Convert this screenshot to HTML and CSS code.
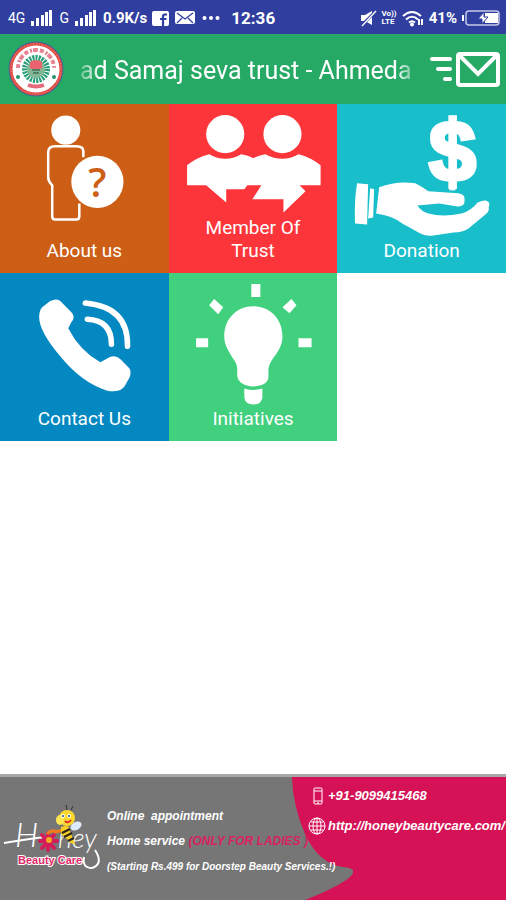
FILE: index.html
```html
<!DOCTYPE html>
<html lang="en">
<head>
<meta charset="utf-8">
<meta name="viewport" content="width=device-width, initial-scale=1">
<title>Samaj seva trust - Ahmedabad</title>
<link rel="stylesheet" href="styles.css">
</head>
<body>
<div class="status">
  <span class="net">4G</span>
  <svg class="bars" width="22" height="18" viewBox="0 0 22 18" aria-hidden="true"><path d="M2.500 12v5M7.500 9v8M12.500 6v11M16.500 3v14M20.500 1v16"/></svg>
  <span class="net second">G</span>
  <svg class="bars" width="22" height="18" viewBox="0 0 22 18" aria-hidden="true"><path d="M2.500 12v5M7.500 9v8M12.500 6v11M16.500 3v14M20.500 1v16"/></svg>
  <span class="rate">0.9K/s</span>
  <svg width="17" height="17" viewBox="0 0 17 17" aria-hidden="true"><rect x="0" y="1" width="17" height="15" rx="2" fill="#fff"/><path d="M15 4.500h-2q-2 0-2 2.200V16M8 9h6.500" fill="none" stroke="#303f9f" stroke-width="2.200"/></svg>
  <svg class="mail-mini" width="20" height="14" viewBox="0 0 20 14" aria-hidden="true"><rect x="0" y="0" width="20" height="13" rx="2" fill="#fff"/><path d="M2 2l8 6 8-6M2 12l5-5M18 12l-5-5" fill="none" stroke="#303f9f" stroke-width="1.300"/></svg>
  <svg width="18" height="6" viewBox="0 0 18 6" fill="#fff" aria-hidden="true"><circle cx="2.500" cy="3" r="2"/><circle cx="9" cy="3" r="2"/><circle cx="15.500" cy="3" r="2"/></svg>
  <time class="clock">12:36</time>
  <div class="status-right">
    <svg width="17" height="17" viewBox="0 0 17 17" aria-hidden="true"><path d="M1 5h4l7-4v14l-7-4H1z" fill="#fff"/><path d="M1 16L16 1" stroke="#303f9f" stroke-width="3"/><path d="M2 16L16 1" stroke="#fff" stroke-width="1.300"/></svg>
    <span class="volte"><span>Vo))</span><span>LTE</span></span>
    <svg width="22" height="17" viewBox="0 0 22 17" fill="none" stroke="#fff" stroke-width="2" aria-hidden="true"><path d="M1 6q9-8 18 0M4 9.500q6-5.500 12 0M7 12.500q3-2.500 6 0"/><circle cx="10" cy="14.500" r="1" fill="#fff"/><path d="M17 9v6M20 15v-6"/></svg>
    <span class="percent">41%</span>
    <svg width="38" height="16" viewBox="0 0 38 16" aria-hidden="true"><rect x="4" y="1" width="33" height="14" rx="3" fill="none" stroke="#c5cae9" stroke-width="1.500"/><path d="M1 5v6" stroke="#fff" stroke-width="2"/><path d="M23 3h13v10H23z" fill="#fff"/><path d="M22 2l-6 7h4v5l6-7h-4z" fill="#fff" stroke="#303f9f" stroke-width="1"/></svg>
  </div>
</div>

<header class="header">
  <svg class="emblem" viewBox="0 0 56 56" aria-hidden="true">
    <circle cx="28" cy="28" r="27.500" fill="#346d99"/>
    <circle cx="28" cy="28" r="25" fill="#fff" stroke="#df4b46" stroke-width="3"/>
    <circle cx="28" cy="28" r="25" fill="none" stroke="#f09a86" stroke-width="1" stroke-dasharray="1 2"/>
    <path d="M10 27a18 18 0 0 1 36 0" fill="none" stroke="#e88292" stroke-width="4" stroke-dasharray="4 2 2 1 5 2"/>
    <path d="M20 44q8 3 16 0" fill="none" stroke="#e46b77" stroke-width="4"/>
    <circle cx="28" cy="28" r="11" fill="none" stroke="#299c78" stroke-width="6" stroke-dasharray="2 1"/>
    <circle cx="28" cy="28" r="9" fill="#83b794"/>
    <path d="M22 21q6-4 12 0v6q-6 4-12 0z" fill="#e96270"/>
    <path d="M24 29h8M25 32h6" stroke="#4d8268" stroke-width="2"/>
    <circle cx="10" cy="36" r="2" fill="#24946f"/><circle cx="46" cy="36" r="2" fill="#24946f"/>
  </svg>
  <h1 class="title">ad Samaj seva trust - Ahmeda</h1>
  <button class="send" type="button" aria-label="Send message">
    <svg width="72" height="36" viewBox="0 0 72 36" fill="none" stroke="#fff" aria-hidden="true"><path d="M3 8h18M9 18h12M16 28h5" stroke-width="4" stroke-linecap="round"/><rect x="29" y="3" width="40" height="31" rx="2" stroke-width="4"/><path d="M31 5l18 18L67 5" stroke-width="4"/></svg>
  </button>
</header>

<main class="tiles">
  <a class="tile about" href="#about">
    <svg viewBox="0 0 168 134" aria-hidden="true">
      <circle cx="65.500" cy="26" r="14.500" fill="#fff"/>
      <path d="M83 53v-6q0-5-7-5H55q-7 0-7 6v25q0 4 4 8v31q0 3 3 3h21q3 0 3-3V99" fill="none" stroke="#fff" stroke-width="2.500"/>
      <circle cx="97" cy="77.500" r="26" fill="#fff"/>
      <text class="question" x="97" y="93" text-anchor="middle">?</text>
    </svg>
    <span class="label">About us</span>
  </a>
  <a class="tile member" href="#members">
    <svg viewBox="0 0 168 111" fill="#fff" aria-hidden="true">
      <circle cx="56" cy="30" r="19"/><circle cx="113" cy="30" r="19"/>
      <path d="M18 81V61Q28 53 40 50Q56 59 72 50Q79 51 84 54Q89 51 96 50Q113 59 129 50Q141 53 151 61V81H130L136 87L114 108V95H83L92 81H78L75 85H57V98L37 81Z"/>
    </svg>
    <span class="label">Member Of<br>Trust</span>
  </a>
  <a class="tile donation" href="#donation">
    <svg viewBox="0 0 168 134" fill="#fff" aria-hidden="true">
      <text class="dollar" x="115" y="77" text-anchor="middle">$</text>
      <path d="M112 12h6v74h-6z"/>
      <path d="M20 79l11 1-1 40-12-1Q17 97 20 79z"/>
      <path d="M33 84l4 1-1 28-5 1z"/>
      <path d="M42 83Q60 76 78 79Q84 82 91 87L121 89Q127 90 127 94V98Q126 102 120 102L102 99L80 101Q84 107 91 109Q105 113 124 109Q134 106 140 98Q148 95 150 97Q153 98 151 103Q152 106 149 109L131 124Q125 128 116 128L96 131Q89 132 83 129L65 119Q55 111 39 109Z"/>
    </svg>
    <span class="label">Donation</span>
  </a>
  <a class="tile contact" href="#contact">
    <svg viewBox="0 0 168 134" aria-hidden="true">
      <path d="M42 34L50 28Q58 24 62 30L72 40Q75 45 71 49L68 55Q79 77 100 89L109 84Q115 81 120 86L129 95Q131 99 129 104L124 113Q118 120 106 117Q81 109 60 83Q39 58 39 44Q39 37 42 34Z" fill="#fff"/>
      <path d="M87 46Q111 47 111 71M85 30Q128 34 127 73" fill="none" stroke="#fff" stroke-width="5.500" stroke-linecap="round"/>
    </svg>
    <span class="label">Contact Us</span>
  </a>
  <a class="tile initiatives" href="#initiatives">
    <svg viewBox="0 0 168 134" fill="#fff" aria-hidden="true">
      <path d="M84 33C67 33 55 46 55 63C55 72 60 79 65 87Q68 91 68 97V103Q70 112 84 113Q98 112 99 104V97Q99 92 103 86C108 79 113 73 113 63C113 46 101 33 84 33Z"/>
      <path d="M75 115q9 3 18 0v9q-1 7-9 7t-9-7z"/>
      <path d="M82 11h9v13h-9zM27 65h12v9H27zM129 65h13v9h-13zM45 26l9 8-5 7-9-9zM122 26l5 6-7 8-7-6z"/>
    </svg>
    <span class="label">Initiatives</span>
  </a>
</main>

<footer class="banner">
  <svg class="backdrop" viewBox="0 0 506 123" preserveAspectRatio="none" aria-hidden="true"><path d="M292 0H506V123H305Q338 110 350 100Q359 91 343 90Q319 87 305 57Q293 30 292 0Z" fill="#d51256"/></svg>
  <svg class="brand" width="106" height="76" viewBox="0 0 106 76" role="img" aria-label="Honey Beauty Care">
    <text class="script" x="15" y="45" font-size="33">H</text>
    <path d="M4 41Q22 38 44 35" fill="none" stroke="#fff" stroke-width="2"/>
    <text class="script" x="58" y="46" font-size="27">ney</text>
    <path d="M95 48Q104 62 92 66Q82 66 84 55" fill="none" stroke="#fff" stroke-width="2"/>
    <g stroke="#d61b5b" stroke-width="4" stroke-linecap="round"><path d="M48 31v17M40 39h17M42 33l12 13M54 33L42 46"/></g>
    <circle cx="49" cy="38" r="3" fill="#f4aa20"/>
    <path d="M47 32q5-5 9-2l6-2" fill="none" stroke="#ee7b1e" stroke-width="3"/>
    <path d="M61 25q9-3 9 4l5 13q-5 0-8-5l-6-5z" fill="#f5cf27"/>
    <path d="M62 31l8-4M64 35l8-4M68 39l6-3" stroke="#292319" stroke-width="2"/>
    <ellipse cx="76" cy="24" rx="6" ry="4" fill="#dceafa" transform="rotate(-30 76 24)"/>
    <circle cx="67" cy="16" r="8" fill="#fbd92c"/>
    <ellipse cx="60" cy="18" rx="4" ry="5" fill="#ffe552"/>
    <circle cx="63" cy="14" r="2" fill="#fff"/><circle cx="69" cy="14" r="2" fill="#fff"/><circle cx="63" cy="14" r="1" fill="#245163"/><circle cx="69" cy="14" r="1" fill="#245163"/>
    <path d="M65 19q3 3 6-1" fill="none" stroke="#e42f31" stroke-width="2"/>
    <path d="M67 8l-1-5M71 8l2-4" stroke="#333" stroke-width="1"/>
    <text class="care" x="18" y="62">Beauty Care</text>
  </svg>
  <div class="offer">
    <p>Online&nbsp; appointment</p>
    <p>Home service <span class="ladies">(ONLY FOR LADIES )</span></p>
    <p class="fine">(Starting Rs.499 for Doorstep Beauty Services.!)</p>
  </div>
  <div class="contacts">
    <a href="tel:+919099415468"><svg width="18" height="18" viewBox="0 0 18 18" fill="none" stroke="#fff" stroke-width="1" aria-hidden="true"><rect x="6" y="1" width="8" height="16" rx="1"/><path d="M6 4h8M6 14h8M9 16h2"/></svg>+91-9099415468</a>
    <a href="http://honeybeautycare.com/"><svg width="18" height="18" viewBox="0 0 18 18" fill="none" stroke="#fff" stroke-width="1" aria-hidden="true"><circle cx="9" cy="9" r="8"/><ellipse cx="9" cy="9" rx="4" ry="8"/><path d="M1 9h16M9 1v16M3 5h12M3 13h12"/></svg>http://honeybeautycare.com/</a>
  </div>
</footer>
</body>
</html>
```
FILE: styles.css
```css
* { box-sizing: border-box; }

body {
  margin: 0;
  min-height: 100vh;
  display: flex;
  flex-direction: column;
  background: #fff;
  color: #fff;
  font-family: Roboto, "Liberation Sans", sans-serif;
  overflow-x: hidden;
}

a { color: inherit; text-decoration: none; }
svg { flex: none; }

.status {
  height: 34px;
  padding: 2px 6px 0 8px;
  display: flex;
  align-items: center;
  gap: 5px;
  background: #303f9f;
  font-size: 15px;
  font-weight: 700;
  white-space: nowrap;
}
.net { font-size: 14px; font-weight: 400; }
.second { margin-left: 2px; }
.bars { fill: none; stroke: #fff; stroke-width: 3; }
.rate { margin-left: 2px; }
.mail-mini { margin: 0 2px 0 1px; }
.clock { margin-left: 6px; font-size: 17px; }
.status-right {
  margin-left: auto;
  display: flex;
  align-items: center;
  gap: 5px;
}
.volte {
  display: flex;
  flex-direction: column;
  font-size: 8px;
  line-height: 8px;
}
.percent { font-size: 15px; }

.header {
  height: 70px;
  padding: 0 5px 0 8px;
  display: flex;
  align-items: center;
  background: #25a965;
}
.emblem { width: 56px; height: 56px; }
.title {
  flex: 1;
  min-width: 0;
  margin: 3px 12px 0 16px;
  overflow: hidden;
  font-size: 25px;
  font-weight: 400;
  line-height: 32px;
  white-space: nowrap;
  mask-image: linear-gradient(to right, rgba(0, 0, 0, .3), #000 20px, #000 calc(100% - 22px), rgba(0, 0, 0, .2));
}
.send {
  display: flex;
  padding: 0;
  border: 0;
  background: none;
}

.tiles {
  display: grid;
  grid-template-columns: repeat(3, 1fr);
}
.tile {
  aspect-ratio: 1;
  display: flex;
  flex-direction: column;
  padding-bottom: 11px;
}
.tile svg { display: block; width: 100%; }
.label {
  margin-top: auto;
  font-size: 19px;
  line-height: 23px;
  text-align: center;
}
.about { background: #cc5e16; }
.member { background: #fc353a; }
.donation { background: #19becb; }
.contact { background: #0388c1; }
.initiatives { background: #40d07e; }
.question { fill: #cc5e16; font: 600 40px "Open Sans", sans-serif; }
.dollar {
  stroke: #fff;
  stroke-width: 4px;
  font: 700 84px "Liberation Sans", sans-serif;
}

.banner {
  position: relative;
  margin-top: auto;
  min-height: 126px;
  display: grid;
  grid-template-columns: 107px 201px 1fr;
  align-items: start;
  border-top: 3px solid #a7a7a7;
  background: #767676;
  font-family: "Liberation Sans", sans-serif;
  font-size: 12px;
  font-style: italic;
  font-weight: 700;
  white-space: nowrap;
}
.backdrop {
  position: absolute;
  inset: 0;
  width: 100%;
  height: 100%;
}
.brand, .offer, .contacts { position: relative; }
.brand { margin-top: 25px; }
.script { fill: #fff; font-family: Lato, sans-serif; font-style: italic; font-weight: 300; }
.care {
  fill: #e02866;
  stroke: #fff;
  stroke-width: 2px;
  paint-order: stroke;
  font: 700 11px "Liberation Sans", sans-serif;
}
.offer { padding-top: 27px; }
.offer p { margin: 0; line-height: 25px; }
.offer .fine { font-size: 10px; }
.ladies { color: #d92260; }
.contacts { padding-top: 4px; font-size: 13px; }
.contacts a {
  display: flex;
  align-items: center;
  gap: 2px;
  line-height: 30px;
}
```
